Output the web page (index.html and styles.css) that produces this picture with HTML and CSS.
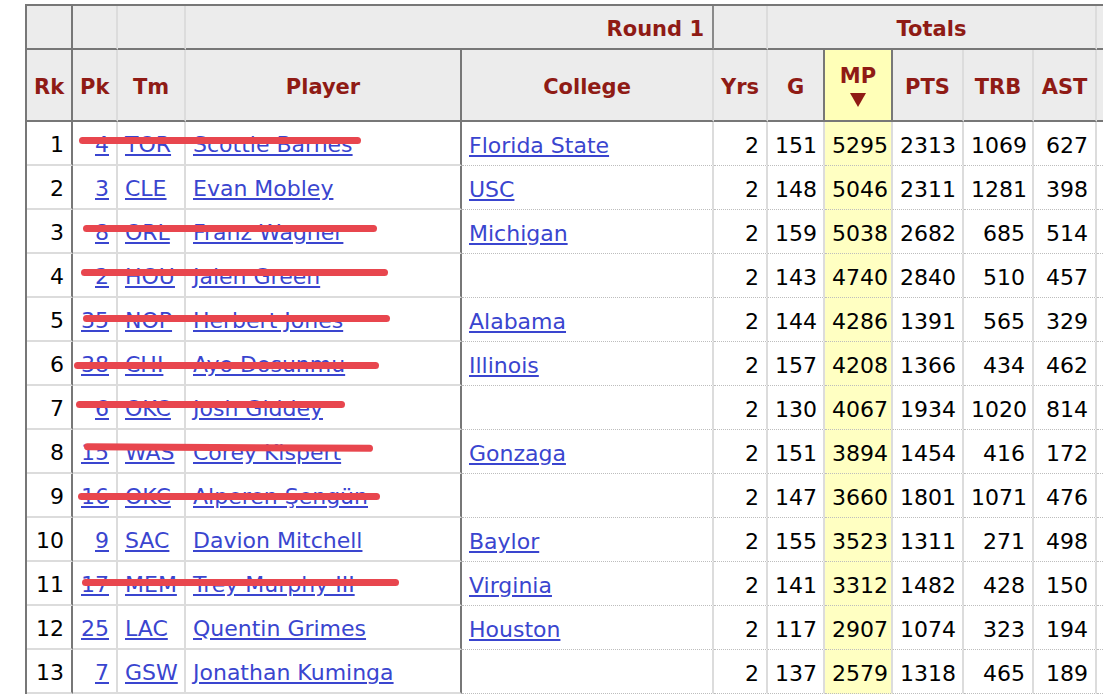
FILE: index.html
```html
<!DOCTYPE html>
<html lang="en">
<head>
<meta charset="utf-8">
<title>2021 NBA Draft — Round 1</title>
<link rel="stylesheet" href="styles.css">
</head>
<body>
<div class="wrap">
  <table class="stats">
    <colgroup>
      <col class="c-rk"><col class="c-pk"><col class="c-tm"><col class="c-player"><col class="c-college">
      <col class="c-yrs"><col class="c-g"><col class="c-mp"><col class="c-pts"><col class="c-trb"><col class="c-ast"><col class="c-next">
    </colgroup>
    <thead>
      <tr class="over">
        <th class="dk"></th>
        <th></th>
        <th></th>
        <th colspan="2" class="round">Round 1</th>
        <th></th>
        <th colspan="5">Totals</th>
        <th></th>
      </tr>
      <tr class="main">
        <th class="dk">Rk</th>
        <th>Pk</th>
        <th>Tm</th>
        <th class="dk">Player</th>
        <th>College</th>
        <th>Yrs</th>
        <th class="dk">G</th>
        <th class="dk sorted"><div class="mp-stack"><span>MP</span><svg width="16" height="14" viewBox="0 0 16 14"><path d="M0 0H16L8 14Z" fill="#8f1b15"/></svg></div></th>
        <th>PTS</th>
        <th>TRB</th>
        <th>AST</th>
        <th></th>
      </tr>
    </thead>
    <tbody>
      <tr><td class="s dk">1</td><td class="s"><a href="#">4</a></td><td class="s l"><a href="#">TOR</a></td><td class="s l dk"><a href="#">Scottie Barnes</a></td><td class="l"><a href="#">Florida State</a></td><td>2</td><td>151</td><td class="mp">5295</td><td>2313</td><td>1069</td><td>627</td><td></td></tr>
      <tr><td class="s dk">2</td><td class="s"><a href="#">3</a></td><td class="s l"><a href="#">CLE</a></td><td class="s l dk"><a href="#">Evan Mobley</a></td><td class="l"><a href="#">USC</a></td><td>2</td><td>148</td><td class="mp">5046</td><td>2311</td><td>1281</td><td>398</td><td></td></tr>
      <tr><td class="s dk">3</td><td class="s"><a href="#">8</a></td><td class="s l"><a href="#">ORL</a></td><td class="s l dk"><a href="#">Franz Wagner</a></td><td class="l"><a href="#">Michigan</a></td><td>2</td><td>159</td><td class="mp">5038</td><td>2682</td><td>685</td><td>514</td><td></td></tr>
      <tr><td class="s dk">4</td><td class="s"><a href="#">2</a></td><td class="s l"><a href="#">HOU</a></td><td class="s l dk"><a href="#">Jalen Green</a></td><td class="l"></td><td>2</td><td>143</td><td class="mp">4740</td><td>2840</td><td>510</td><td>457</td><td></td></tr>
      <tr><td class="s dk">5</td><td class="s"><a href="#">35</a></td><td class="s l"><a href="#">NOP</a></td><td class="s l dk"><a href="#">Herbert Jones</a></td><td class="l"><a href="#">Alabama</a></td><td>2</td><td>144</td><td class="mp">4286</td><td>1391</td><td>565</td><td>329</td><td></td></tr>
      <tr><td class="s dk">6</td><td class="s"><a href="#">38</a></td><td class="s l"><a href="#">CHI</a></td><td class="s l dk"><a href="#">Ayo Dosunmu</a></td><td class="l"><a href="#">Illinois</a></td><td>2</td><td>157</td><td class="mp">4208</td><td>1366</td><td>434</td><td>462</td><td></td></tr>
      <tr><td class="s dk">7</td><td class="s"><a href="#">6</a></td><td class="s l"><a href="#">OKC</a></td><td class="s l dk"><a href="#">Josh Giddey</a></td><td class="l"></td><td>2</td><td>130</td><td class="mp">4067</td><td>1934</td><td>1020</td><td>814</td><td></td></tr>
      <tr><td class="s dk">8</td><td class="s"><a href="#">15</a></td><td class="s l"><a href="#">WAS</a></td><td class="s l dk"><a href="#">Corey Kispert</a></td><td class="l"><a href="#">Gonzaga</a></td><td>2</td><td>151</td><td class="mp">3894</td><td>1454</td><td>416</td><td>172</td><td></td></tr>
      <tr><td class="s dk">9</td><td class="s"><a href="#">16</a></td><td class="s l"><a href="#">OKC</a></td><td class="s l dk"><a href="#">Alperen Şengün</a></td><td class="l"></td><td>2</td><td>147</td><td class="mp">3660</td><td>1801</td><td>1071</td><td>476</td><td></td></tr>
      <tr><td class="s dk">10</td><td class="s"><a href="#">9</a></td><td class="s l"><a href="#">SAC</a></td><td class="s l dk"><a href="#">Davion Mitchell</a></td><td class="l"><a href="#">Baylor</a></td><td>2</td><td>155</td><td class="mp">3523</td><td>1311</td><td>271</td><td>498</td><td></td></tr>
      <tr><td class="s dk">11</td><td class="s"><a href="#">17</a></td><td class="s l"><a href="#">MEM</a></td><td class="s l dk"><a href="#">Trey Murphy III</a></td><td class="l"><a href="#">Virginia</a></td><td>2</td><td>141</td><td class="mp">3312</td><td>1482</td><td>428</td><td>150</td><td></td></tr>
      <tr><td class="s dk">12</td><td class="s"><a href="#">25</a></td><td class="s l"><a href="#">LAC</a></td><td class="s l dk"><a href="#">Quentin Grimes</a></td><td class="l"><a href="#">Houston</a></td><td>2</td><td>117</td><td class="mp">2907</td><td>1074</td><td>323</td><td>194</td><td></td></tr>
      <tr><td class="s dk">13</td><td class="s"><a href="#">7</a></td><td class="s l"><a href="#">GSW</a></td><td class="s l dk"><a href="#">Jonathan Kuminga</a></td><td class="l"></td><td>2</td><td>137</td><td class="mp">2579</td><td>1318</td><td>465</td><td>189</td><td></td></tr>
    </tbody>
  </table>

  <div class="strike st1"></div>
  <div class="strike st3"></div>
  <div class="strike st4"></div>
  <div class="strike st5"></div>
  <div class="strike st6"></div>
  <div class="strike st7"></div>
  <div class="strike st8"></div>
  <div class="strike st9"></div>
  <div class="strike st11"></div>
</div>
</body>
</html>
```

FILE: styles.css
```css
html, body {
  margin: 0;
  background: #fff;
  overflow: hidden;
}

body {
  font-family: "DejaVu Sans", Verdana, sans-serif;
}

.wrap {
  position: relative;
  padding: 4px 0 0 25px;
}

.stats {
  border-collapse: separate;
  border-spacing: 0;
  table-layout: fixed;
  width: 1142px;
  border-top: 2px solid #777;
  border-left: 2px solid #777;
}

.c-rk { width: 46px; }
.c-pk { width: 45px; }
.c-tm { width: 68px; }
.c-player { width: 276px; }
.c-college { width: 252px; }
.c-yrs { width: 54px; }
.c-g { width: 57px; }
.c-mp { width: 68px; }
.c-pts { width: 71px; }
.c-trb { width: 70px; }
.c-ast { width: 63px; }
.c-next { width: 70px; }

.stats th,
.stats td {
  box-sizing: border-box;
  padding: 3px 7px 0;
  white-space: nowrap;
  overflow: hidden;
  border-right: 2px solid #dcdcdc;
  vertical-align: middle;
}

.stats th {
  background: #ececec;
  color: #8f1b15;
  font-weight: bold;
  font-size: 21px;
  text-align: center;
  border-bottom: 2px solid #777;
}

.stats tr.over { height: 44px; }
.stats tr.main { height: 72px; }

.stats th.round {
  text-align: right;
  padding-right: 8px;
  border-right-color: #8a8a8a;
}

.stats th.dk,
.stats td.dk {
  border-right-color: #777;
}

.stats th.sorted {
  background: #ffffb8;
}

.mp-stack span {
  display: block;
  line-height: 21px;
}

.mp-stack svg {
  display: block;
  margin: 6px auto 0;
}

.stats tbody tr { height: 44px; }

.stats td {
  font-size: 22px;
  color: #000;
  text-align: right;
  border-bottom: 1px dotted #bdbdbd;
}

.stats td.s {
  border-bottom: 2px solid #dcdcdc;
}

.stats td.l {
  text-align: left;
}

.stats td.mp {
  background: #ffffc2;
}

.stats a {
  color: #3a45cf;
}

.strike {
  position: absolute;
  height: 7px;
  border-radius: 4px;
  background: #e8464e;
}

.st1 { top: 137px; left: 79px; width: 282px; }
.st3 { top: 225px; left: 83px; width: 294px; }
.st4 { top: 269px; left: 81px; width: 307px; }
.st5 { top: 315px; left: 83px; width: 307px; }
.st6 { top: 362px; left: 74px; width: 305px; }
.st7 { top: 401px; left: 76px; width: 269px; }
.st8 { top: 444px; left: 84px; width: 289px; transform: rotate(0.35deg); }
.st9 { top: 493px; left: 78px; width: 302px; }
.st11 { top: 579px; left: 82px; width: 317px; }
```
